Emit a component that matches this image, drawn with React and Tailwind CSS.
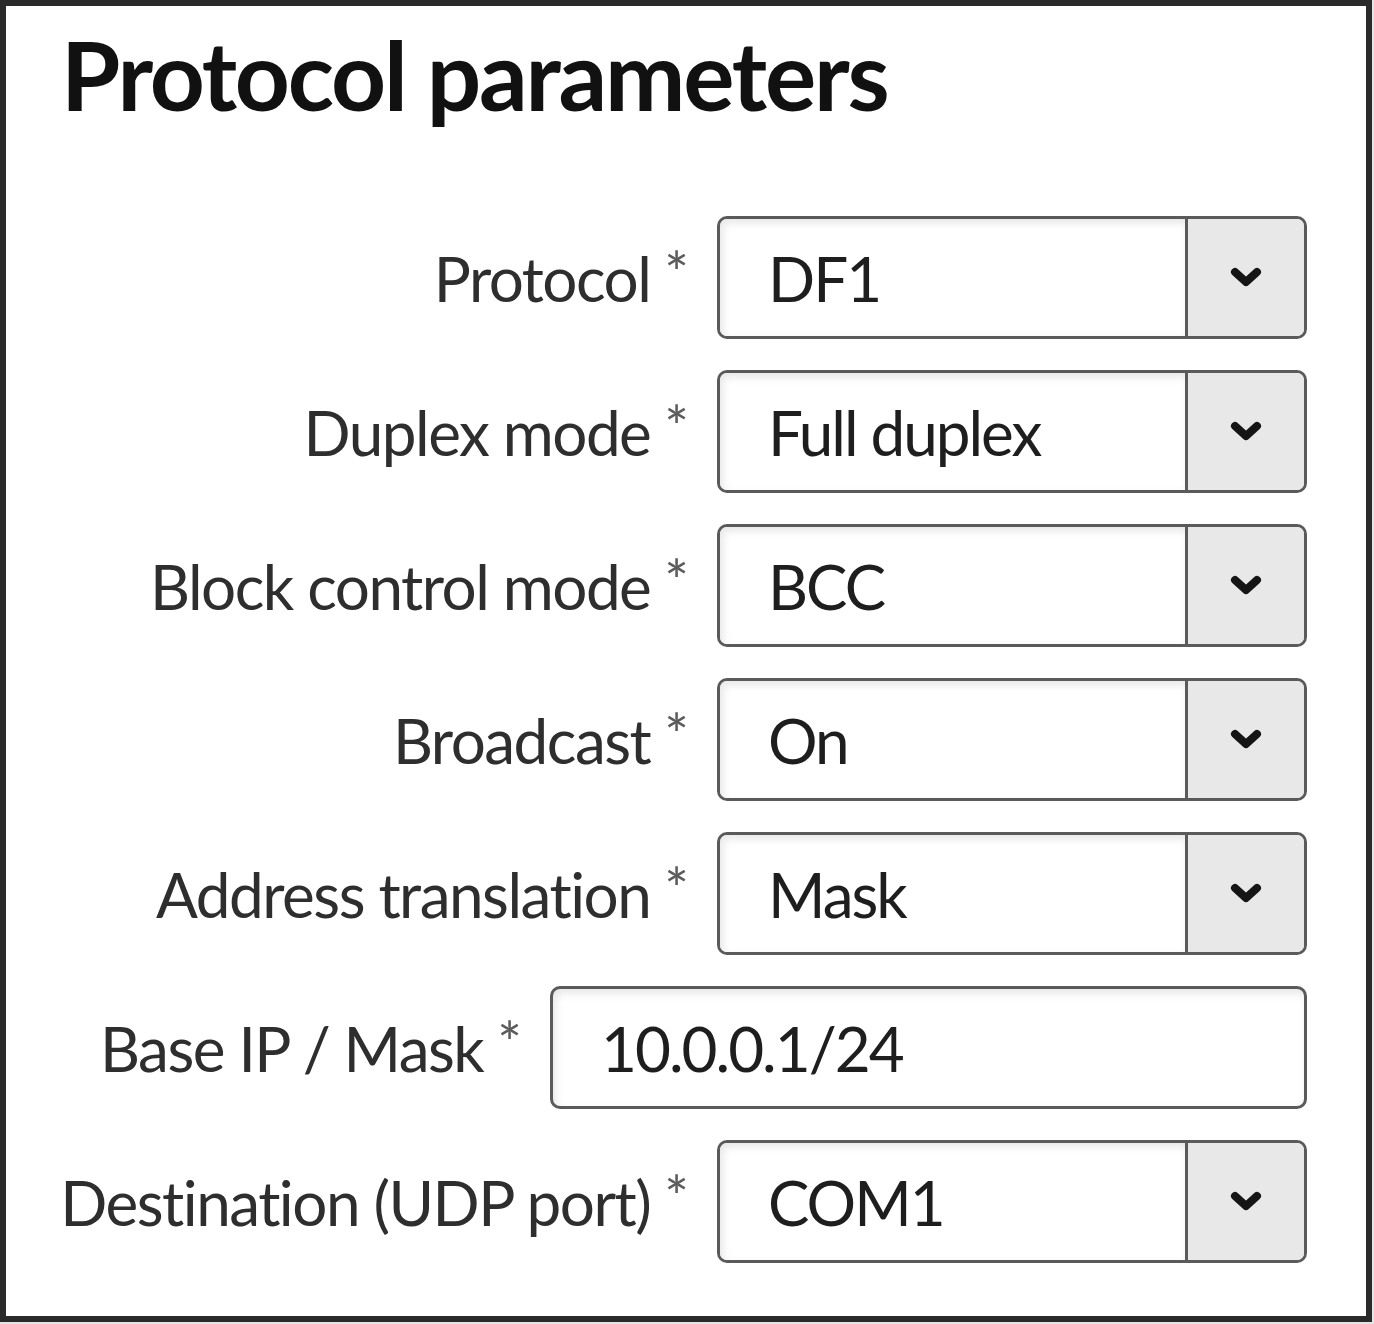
import React from "react";

function Chevron() {
  return (
    <svg width="36" height="26" viewBox="0 0 36 26" className="block">
      <path d="M7 7 L18 17 L29 7" fill="none" stroke="#151515" strokeWidth="8" strokeLinecap="round" strokeLinejoin="round" />
    </svg>
  );
}

function Label({ text }) {
  return (
    <div className="flex items-start">
      <span className="text-[62px] leading-none tracking-[-1.5px] text-[#2e2e2e]">{text}</span>
      <span className="ml-[14px] -mt-[4px] text-[58px] leading-none text-[#5c5c5c]">*</span>
    </div>
  );
}

function SelectRow({ label, value }) {
  return (
    <div className="flex items-center justify-end h-[123px]">
      <Label text={label} />
      <div className="ml-[28px] flex w-[590px] h-[123px] rounded-[10px] border-[3px] border-[#5a5a5a] overflow-hidden">
        <div className="flex-1 flex items-center pl-[48px] bg-white shadow-[inset_3px_4px_8px_rgba(0,0,0,0.10)] text-[62px] leading-none tracking-[-2px] text-[#1e1e1e]">
          {value}
        </div>
        <div className="w-[119px] border-l-[3px] border-[#5a5a5a] bg-[#e8e8e8] flex items-center justify-center">
          <Chevron />
        </div>
      </div>
    </div>
  );
}

function InputRow({ label, value }) {
  return (
    <div className="flex items-center justify-end h-[123px]">
      <Label text={label} />
      <div className="ml-[28px] flex items-center w-[757px] h-[123px] rounded-[10px] border-[3px] border-[#5a5a5a] bg-white pl-[48px] shadow-[inset_3px_4px_8px_rgba(0,0,0,0.10)] text-[62px] leading-none tracking-[-2px] text-[#1e1e1e]">
        {value}
      </div>
    </div>
  );
}

export default function App() {
  return (
    <div className="w-[1374px] h-[1324px] bg-[#e4e4e4]" style={{ fontFamily: "Lato, 'Open Sans', sans-serif" }}>
      <div className="w-[1372px] h-[1322px] border-[6px] border-[#2a2a2a] bg-white">
        <h1 className="pl-[55px] pt-[10px] text-[96px] font-bold leading-[116px] text-[#111] tracking-[-2.2px]">
          Protocol parameters
        </h1>
        <div className="mt-[84px] pr-[59px] flex flex-col gap-[31px]">
          <SelectRow label="Protocol" value="DF1" />
          <SelectRow label="Duplex mode" value="Full duplex" />
          <SelectRow label="Block control mode" value="BCC" />
          <SelectRow label="Broadcast" value="On" />
          <SelectRow label="Address translation" value="Mask" />
          <InputRow label="Base IP / Mask" value="10.0.0.1/24" />
          <SelectRow label="Destination (UDP port)" value="COM1" />
        </div>
      </div>
    </div>
  );
}
